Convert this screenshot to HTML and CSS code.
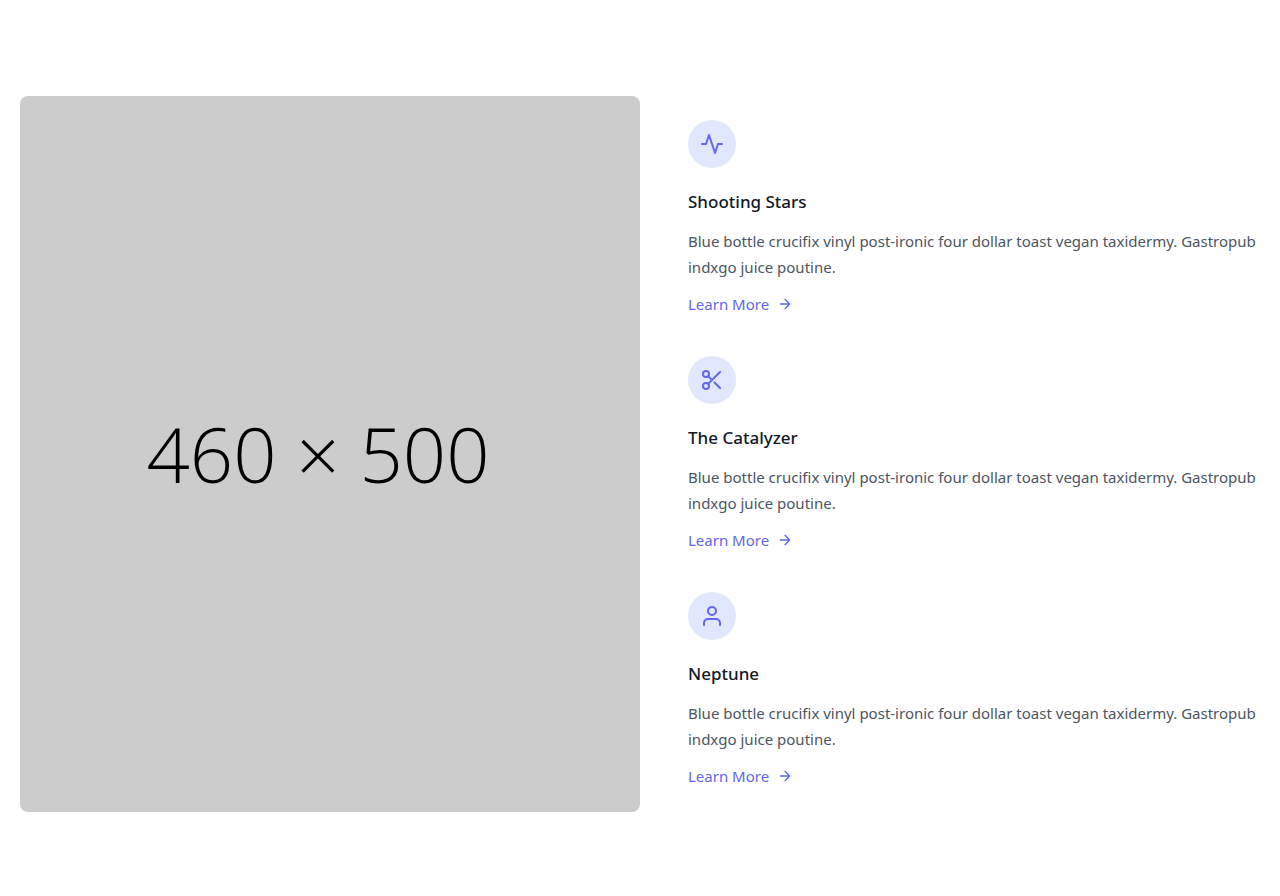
FILE: index.html
```html
<!DOCTYPE html>
<html lang="en">
<head>
<meta charset="utf-8">
<meta name="viewport" content="width=device-width, initial-scale=1">
<title>Features</title>
<link rel="stylesheet" href="styles.css">
</head>
<body>
<main class="container">
  <div class="placeholder" role="img" aria-label="Placeholder, 460 by 500"><span class="placeholder-size">460 × 500</span></div>
  <div class="features">
    <section class="feature">
      <div class="badge">
        <svg class="icon" viewBox="0 0 24 24"><path d="M22 12h-4l-3 9L9 3l-3 9H2"/></svg>
      </div>
      <h2 class="title">Shooting Stars</h2>
      <p class="text">Blue bottle crucifix vinyl post-ironic four dollar toast vegan taxidermy. Gastropub indxgo juice poutine.</p>
      <a class="link" href="#">Learn More <svg class="arrow" viewBox="0 0 24 24"><path d="M5 12h14M12 5l7 7-7 7"/></svg></a>
    </section>
    <section class="feature">
      <div class="badge">
        <svg class="icon" viewBox="0 0 24 24"><circle cx="6" cy="6" r="3"/><circle cx="6" cy="18" r="3"/><path d="M20 4L8.12 15.88M14.47 14.48L20 20M8.12 8.12L12 12"/></svg>
      </div>
      <h2 class="title">The Catalyzer</h2>
      <p class="text">Blue bottle crucifix vinyl post-ironic four dollar toast vegan taxidermy. Gastropub indxgo juice poutine.</p>
      <a class="link" href="#">Learn More <svg class="arrow" viewBox="0 0 24 24"><path d="M5 12h14M12 5l7 7-7 7"/></svg></a>
    </section>
    <section class="feature">
      <div class="badge">
        <svg class="icon" viewBox="0 0 24 24"><path d="M20 21v-2a4 4 0 00-4-4H8a4 4 0 00-4 4v2"/><circle cx="12" cy="7" r="4"/></svg>
      </div>
      <h2 class="title">Neptune</h2>
      <p class="text">Blue bottle crucifix vinyl post-ironic four dollar toast vegan taxidermy. Gastropub indxgo juice poutine.</p>
      <a class="link" href="#">Learn More <svg class="arrow" viewBox="0 0 24 24"><path d="M5 12h14M12 5l7 7-7 7"/></svg></a>
    </section>
  </div>
</main>
</body>
</html>
```
FILE: styles.css
```css
* {
  box-sizing: border-box;
}

body {
  margin: 0;
  background: #fff;
  color: #4b5563;
  font: 15px/24px "Segoe UI", "Noto Sans", "Open Sans", sans-serif;
}

.container {
  display: grid;
  grid-template-columns: 1fr 1fr;
  padding: 96px 20px 84px;
}

.placeholder {
  display: flex;
  align-items: center;
  justify-content: center;
  padding-right: 24px;
  border-radius: 8px;
  background: #ccc;
  color: #000;
}

.placeholder-size {
  font: 300 76px/104px "Open Sans", sans-serif;
  white-space: nowrap;
}

.features {
  display: flex;
  flex-direction: column;
  gap: 40px;
  padding: 24px 0 24px 48px;
}

.feature {
  display: flex;
  flex-direction: column;
  align-items: flex-start;
}

.badge {
  display: flex;
  align-items: center;
  justify-content: center;
  width: 48px;
  height: 48px;
  margin-bottom: 20px;
  border-radius: 50%;
  background: #e0e7ff;
  color: #6366f1;
}

.icon,
.arrow {
  fill: none;
  stroke: currentColor;
  stroke-width: 2;
  stroke-linecap: round;
  stroke-linejoin: round;
}

.icon {
  width: 24px;
  height: 24px;
}

.title {
  margin: 0 0 12px;
  color: #111827;
  font-size: 17px;
  font-weight: 500;
  line-height: 28px;
}

.text {
  margin: 0;
  line-height: 26px;
}

.link {
  display: inline-flex;
  align-items: center;
  gap: 8px;
  margin-top: 12px;
  color: #6366f1;
  text-decoration: none;
}

.arrow {
  width: 16px;
  height: 16px;
}

@media (max-width: 900px) {
  .container {
    grid-template-columns: 1fr;
  }

  .placeholder {
    min-height: 400px;
  }

  .features {
    padding-left: 0;
  }
}
```
